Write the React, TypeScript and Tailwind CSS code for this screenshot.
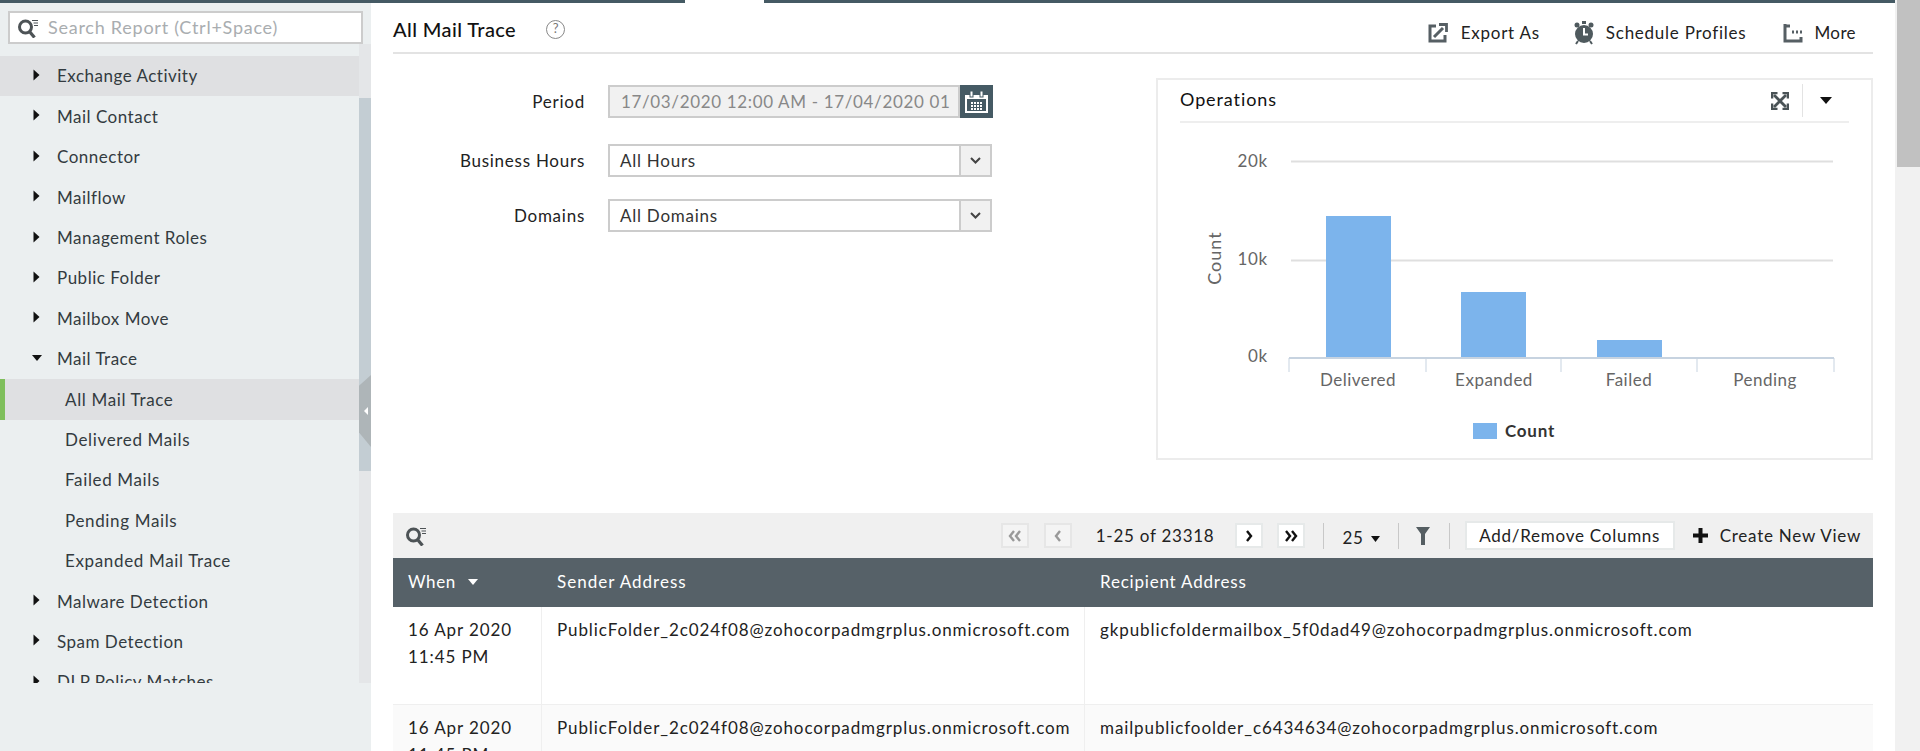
const menu = [
  { label: "Exchange Activity", arrow: "right", hover: true },
  { label: "Mail Contact", arrow: "right" },
  { label: "Connector", arrow: "right" },
  { label: "Mailflow", arrow: "right" },
  { label: "Management Roles", arrow: "right" },
  { label: "Public Folder", arrow: "right" },
  { label: "Mailbox Move", arrow: "right" },
  { label: "Mail Trace", arrow: "down" },
  { label: "All Mail Trace", child: true, active: true },
  { label: "Delivered Mails", child: true },
  { label: "Failed Mails", child: true },
  { label: "Pending Mails", child: true },
  { label: "Expanded Mail Trace", child: true },
  { label: "Malware Detection", arrow: "right" },
  { label: "Spam Detection", arrow: "right" },
  { label: "DLP Policy Matches", arrow: "right" },
];

function SearchIcon() {
  return (
    <svg width="20" height="20" viewBox="0 0 20 20" fill="none" stroke="#4d5356">
      <circle cx="7.500" cy="9" r="6" strokeWidth="3" />
      <path d="M11.500 13.500l5 6" strokeWidth="3.200" />
      <path d="M14 2.500h6M15.500 5h4.500M16 7.500h4" strokeWidth="1.200" />
    </svg>
  );
}

function Arrow({ dir }: { dir?: string }) {
  if (dir === "down") {
    return (
      <svg width="12" height="8" viewBox="0 0 12 8" className="absolute left-[31px] top-[15px]">
        <path d="M1 1h10L6 7z" fill="#111" />
      </svg>
    );
  }
  if (dir === "right") {
    return (
      <svg width="7" height="12" viewBox="0 0 7 12" className="absolute left-[33px] top-[13px]">
        <path d="M0.500 0.500L6.500 6L0.500 11.500z" fill="#111" />
      </svg>
    );
  }
  return null;
}

function Sidebar() {
  return (
    <aside className="relative w-[371px] h-[748px] shrink-0 bg-[#ebeff0]">
      <div className="h-[41px] pl-[8px] pr-[8px] pt-[8px]">
        <div className="flex items-center h-[33px] w-[355px] border-2 border-[#cccccc] bg-white pl-[8px]">
          <SearchIcon />
          <span className="ml-[10px] text-[18px] text-[#a9adb0] tracking-[0.75px]">Search Report (Ctrl+Space)</span>
        </div>
      </div>
      <div className="flex h-[639px] overflow-hidden">
        <div className="w-[359px] pt-[12px]">
          {menu.map((m) => (
            <div
              key={m.label}
              className={`relative flex items-center h-[40.4px] text-[17px] text-[#333b40] ${m.child ? "tracking-[0.65px]" : "tracking-[0.5px]"} ${
                m.active ? "bg-[#dfe0e2] border-l-[5px] border-[#7fbf5c] pl-[60px]" : m.hover ? "bg-[#dfe0e2] pl-[57px]" : m.child ? "pl-[65px]" : "pl-[57px]"
              } ${m.hover ? "text-[#1b1f22]" : ""}`}
            >
              <Arrow dir={m.arrow} />
              {m.label}
            </div>
          ))}
        </div>
        <div className="relative w-[12px] bg-[#e4e6e8]">
          <div className="mt-[54px] h-[373px] bg-[#c3cdd3]" />
          <div className="absolute left-0 top-[331px] w-[12px] h-[72px] bg-[#aeb5b8] [clip-path:polygon(100%_0,100%_100%,0_80%,0_15%)]">
            <div className="absolute left-[5px] top-[32px] border-y-[4px] border-r-[4px] border-y-transparent border-r-white" />
          </div>
        </div>
      </div>
    </aside>
  );
}

function ToolbarButton({ children, on }: { children: React.ReactNode; on?: boolean }) {
  return (
    <span className={`flex items-center justify-center w-[28px] h-[25px] border-2 ${on ? "bg-white border-[#e6e9e9]" : "bg-[#f4f4f4] border-[#e6e6e6]"}`}>
      {children}
    </span>
  );
}

// two chevrons for first/last, one for prev/next
function Chevrons({ n, color, left }: { n: number; color: string; left?: boolean }) {
  return (
    <svg width="16" height="12" viewBox="0 0 16 12" fill="none" stroke={color} strokeWidth="2.400">
      {left ? (
        n === 2 ? <path d="M7 1L3 6l4 5M13 1L9 6l4 5" /> : <path d="M10 1L6 6l4 5" />
      ) : n === 2 ? (
        <path d="M3 1l4 5-4 5M9 1l4 5-4 5" />
      ) : (
        <path d="M6 1l4 5-4 5" />
      )}
    </svg>
  );
}

function CalendarIcon() {
  const cols = [6, 9, 12, 15];
  const rows = [11, 14, 17];
  return (
    <svg width="23" height="22" viewBox="0 0 23 22">
      <path d="M1 5h21v16H1z" fill="none" stroke="#fff" strokeWidth="2" />
      <path d="M1 5h21v3H1z" fill="#fff" />
      <rect x="5" y="0" width="3" height="6" fill="#fff" stroke="#455a64" strokeWidth="1" />
      <rect x="15" y="0" width="3" height="6" fill="#fff" stroke="#455a64" strokeWidth="1" />
      {rows.map((y) => cols.map((x) => <rect key={`${x}-${y}`} x={x} y={y} width="2" height="2" fill="#fff" />))}
    </svg>
  );
}

function Chart() {
  const ticks = [1289, 1426, 1561, 1697, 1834];
  const bars = [
    { x: 1326, top: 216, label: "Delivered" },
    { x: 1461, top: 292, label: "Expanded" },
    { x: 1597, top: 340, label: "Failed" },
    { x: 1732, top: 357, label: "Pending" },
  ];
  return (
    <svg width="713" height="335" viewBox="1158 123 713 335" className="block" style={{ fontFamily: "Lato, sans-serif" }}>
      <path d="M1291 161.500H1833M1291 260.500H1833" stroke="#dfdfdf" strokeWidth="2" />
      {bars.map((b) => (
        <rect key={b.label} x={b.x} y={b.top} width="65" height={357 - b.top} fill="#7cb4ec" />
      ))}
      <path d="M1289 358H1834" stroke="#c7d3e0" strokeWidth="2" />
      {ticks.map((t) => (
        <path key={t} d={`M${t} 358V372`} stroke="#c7d3e0" strokeWidth="1" />
      ))}
      <g fontSize="17" fill="#666" textAnchor="end">
        <text x="1268" y="167">20k</text>
        <text x="1268" y="265">10k</text>
        <text x="1268" y="362">0k</text>
      </g>
      <g fontSize="17" fill="#666" textAnchor="middle" letterSpacing="0.5">
        <text x="1358" y="386">Delivered</text>
        <text x="1494" y="386">Expanded</text>
        <text x="1629" y="386">Failed</text>
        <text x="1765" y="386">Pending</text>
      </g>
      <text x="0" y="0" fontSize="18" fill="#666" textAnchor="middle" letterSpacing="1" transform="translate(1221 258) rotate(-90)">Count</text>
      <rect x="1473" y="423" width="24" height="16" fill="#7cb4ec" />
      <text x="1505" y="437" fontSize="17" fontWeight="700" fill="#333">Count</text>
    </svg>
  );
}

function Field({ label, value }: { label: string; value: string }) {
  return (
    <div className="flex items-center h-[33px]">
      <span className="w-[215px] text-right pr-[23px]">{label}</span>
      <div className="flex w-[384px] h-[33px] border-2 border-[#cccccc] bg-white">
        <span className="flex-1 pl-[10px] leading-[30px] text-[#333]">{value}</span>
        <span className="flex items-center justify-center w-[31px] bg-[#f1f1f1] border-l-2 border-[#cccccc]">
          <svg width="11" height="7" viewBox="0 0 11 7" fill="none" stroke="#444" strokeWidth="2">
            <path d="M1 1l4.500 4.500L10 1" />
          </svg>
        </span>
      </div>
    </div>
  );
}

function Row({ when, time, sender, recipient, alt }: { when: string; time: string; sender: string; recipient: string; alt?: boolean }) {
  return (
    <div className={`flex h-[98px] border-b border-[#efefef] leading-[27px] tracking-[0.9px] ${alt ? "bg-[#fafafa]" : "bg-white"}`}>
      <div className="w-[149px] pl-[15px] pt-[9px] border-r border-[#efefef]">
        {when}
        <br />
        {time}
      </div>
      <div className="w-[543px] pl-[15px] pt-[9px] border-r border-[#efefef]">{sender}</div>
      <div className="pl-[15px] pt-[9px]">{recipient}</div>
    </div>
  );
}

export default function App() {
  return (
    <div className="relative w-[1920px] h-[751px] overflow-hidden bg-white text-[17px] tracking-[0.75px] text-[#222]" style={{ fontFamily: "Lato, sans-serif" }}>
      <div className="flex h-[3px]">
        <div className="w-[685px] bg-[#455a64]" />
        <div className="w-[79px] bg-white" />
        <div className="flex-1 bg-[#455a64]" />
      </div>
      <div className="flex">
        <Sidebar />
        <main className="w-[1524px] pl-[22px] pr-[22px]">
          <div className="flex items-center h-[51px] border-b-2 border-[#e3e3e3]">
            <h1 className="text-[20px] font-medium tracking-[0.4px] text-[#111] mt-[2px]">All Mail Trace</h1>
            <span className="ml-[30px] mt-[3px] flex items-center justify-center w-[19px] h-[19px] rounded-full border-[1.5px] border-[#888] text-[13px] tracking-normal text-[#777]">?</span>
            <div className="ml-auto flex items-center pr-[17px] mt-[10px]">
              <svg width="20" height="20" viewBox="0 0 20 20" fill="none" stroke="#565f64" strokeWidth="3">
                <path d="M8 3H2v15h15v-6" />
                <path d="M6 14l9-9" strokeWidth="3" />
                <path d="M11 1.500h7.500V9" strokeWidth="2.800" />
              </svg>
              <span className="ml-[13px]">Export As</span>
              <svg width="22" height="24" viewBox="0 0 22 24" className="ml-[33px]">
                <circle cx="11" cy="13" r="9" fill="#4f5a5e" />
                <circle cx="4" cy="4" r="2.500" fill="#4f5a5e" />
                <circle cx="18" cy="4" r="2.500" fill="#4f5a5e" />
                <rect x="9" y="0" width="4" height="3" fill="#4f5a5e" />
                <path d="M5 20l-2 3M17 20l2 3" stroke="#4f5a5e" strokeWidth="2" />
                <path d="M11 7v6.500h4" stroke="#fff" strokeWidth="2" fill="none" />
              </svg>
              <span className="ml-[11px]">Schedule Profiles</span>
              <svg width="20" height="20" viewBox="0 0 20 20" fill="none" stroke="#565f64" className="ml-[37px]">
                <path d="M2 1v17h16v-4" strokeWidth="3" />
                <path d="M2 3h5" strokeWidth="3" />
                <path d="M9 9h2M13 9h2M17 9h2" strokeWidth="3" />
              </svg>
              <span className="ml-[11px] tracking-[0.4px]">More</span>
            </div>
          </div>

          <div className="flex h-[459px]">
            <div className="w-[763px] pt-[31px] flex flex-col">
              <div className="flex items-center h-[33px]">
                <span className="w-[215px] text-right pr-[23px]">Period</span>
                <div className="w-[352px] h-[33px] border-2 border-[#cccccc] bg-[#f1f1f1] pl-[11px] leading-[30px] text-[#888] tracking-[0.65px] whitespace-nowrap">
                  17/03/2020 12:00 AM - 17/04/2020 01
                </div>
                <span className="flex items-center justify-center w-[33px] h-[33px] bg-[#455a64]">
                  <CalendarIcon />
                </span>
              </div>
              <div className="mt-[26px]">
                <Field label="Business Hours" value="All Hours" />
              </div>
              <div className="mt-[22px]">
                <Field label="Domains" value="All Domains" />
              </div>
            </div>
            <section className="mt-[24px] w-[717px] h-[382px] border-2 border-[#ececec]">
              <div className="mx-[22px] flex items-center h-[43px] border-b-2 border-[#eeeeee]">
                <span className="text-[18px] tracking-[0.9px] text-[#111] -mt-[2px]">Operations</span>
                <svg width="18" height="18" viewBox="0 0 18 18" className="ml-auto" fill="none" stroke="#4a5356">
                  <path d="M3 3l12 12M15 3L3 15" strokeWidth="2.800" />
                  <path d="M1 6.500V1h5.500M11.500 1H17v5.500M17 11.500V17h-5.500M6.500 17H1v-5.500" strokeWidth="2.600" />
                </svg>
                <span className="ml-[13px] w-px h-[33px] bg-[#e3e3e3]" />
                <svg width="12" height="7" viewBox="0 0 12 7" className="ml-[17px] mr-[17px]">
                  <path d="M0 0h12L6 7z" fill="#111" />
                </svg>
              </div>
              <Chart />
            </section>
          </div>

          <div className="flex items-center h-[45px] bg-[#f0f0f0]">
            <span className="ml-[13px]"><SearchIcon /></span>
            <div className="ml-auto flex items-center pr-[12px]">
              <ToolbarButton><Chevrons n={2} color="#999" left /></ToolbarButton>
              <span className="ml-[15px]"><ToolbarButton><Chevrons n={1} color="#999" left /></ToolbarButton></span>
              <span className="ml-[24px] whitespace-nowrap">1-25 of 23318</span>
              <span className="ml-[21px]"><ToolbarButton on><Chevrons n={1} color="#111" /></ToolbarButton></span>
              <span className="ml-[14px]"><ToolbarButton on><Chevrons n={2} color="#111" /></ToolbarButton></span>
              <span className="ml-[18px] w-px h-[26px] bg-[#c8c8c8]" />
              <span className="ml-[18px] mt-[5px]">25</span>
              <svg width="9" height="6" viewBox="0 0 9 6" className="ml-[7px] mt-[6px]"><path d="M0 0h9L4.500 6z" fill="#111" /></svg>
              <span className="ml-[18px] w-px h-[26px] bg-[#c8c8c8]" />
              <svg width="22" height="18" viewBox="0 0 22 18" className="ml-[13px]"><path d="M4 0h14l-5 7v11h-4V7z" fill="#555e62" /></svg>
              <span className="ml-[15px] w-px h-[26px] bg-[#c8c8c8]" />
              <span className="ml-[15px] flex items-center justify-center w-[210px] h-[29px] bg-white border-2 border-[#e6e9e9]">Add/Remove Columns</span>
              <svg width="15" height="15" viewBox="0 0 15 15" className="ml-[18px]"><path d="M5.500 0h4v5.500H15v4H9.500V15h-4V9.500H0v-4h5.500z" fill="#111" /></svg>
              <span className="ml-[12px]">Create New View</span>
            </div>
          </div>

          <div className="flex items-center h-[49px] bg-[#566168] text-white tracking-[1px] pb-[2px]">
            <div className="w-[149px] pl-[15px] flex items-center tracking-[0.6px]">
              When
              <svg width="10" height="6" viewBox="0 0 10 6" className="ml-[12px]"><path d="M0 0h10L5 6z" fill="#fff" /></svg>
            </div>
            <div className="w-[543px] pl-[15px]">Sender Address</div>
            <div className="pl-[15px] tracking-[0.8px]">Recipient Address</div>
          </div>

          <Row when="16 Apr 2020" time="11:45 PM" sender="PublicFolder_2c024f08@zohocorpadmgrplus.onmicrosoft.com" recipient="gkpublicfoldermailbox_5f0dad49@zohocorpadmgrplus.onmicrosoft.com" />
          <Row alt when="16 Apr 2020" time="11:45 PM" sender="PublicFolder_2c024f08@zohocorpadmgrplus.onmicrosoft.com" recipient="mailpublicfoolder_c6434634@zohocorpadmgrplus.onmicrosoft.com" />
        </main>
        <div className="flex-1 h-[751px] bg-[#f1f1f1] pl-[2px] -mt-[3px]">
          <div className="h-[167px] bg-[#c1c1c1]" />
        </div>
      </div>
    </div>
  );
}
